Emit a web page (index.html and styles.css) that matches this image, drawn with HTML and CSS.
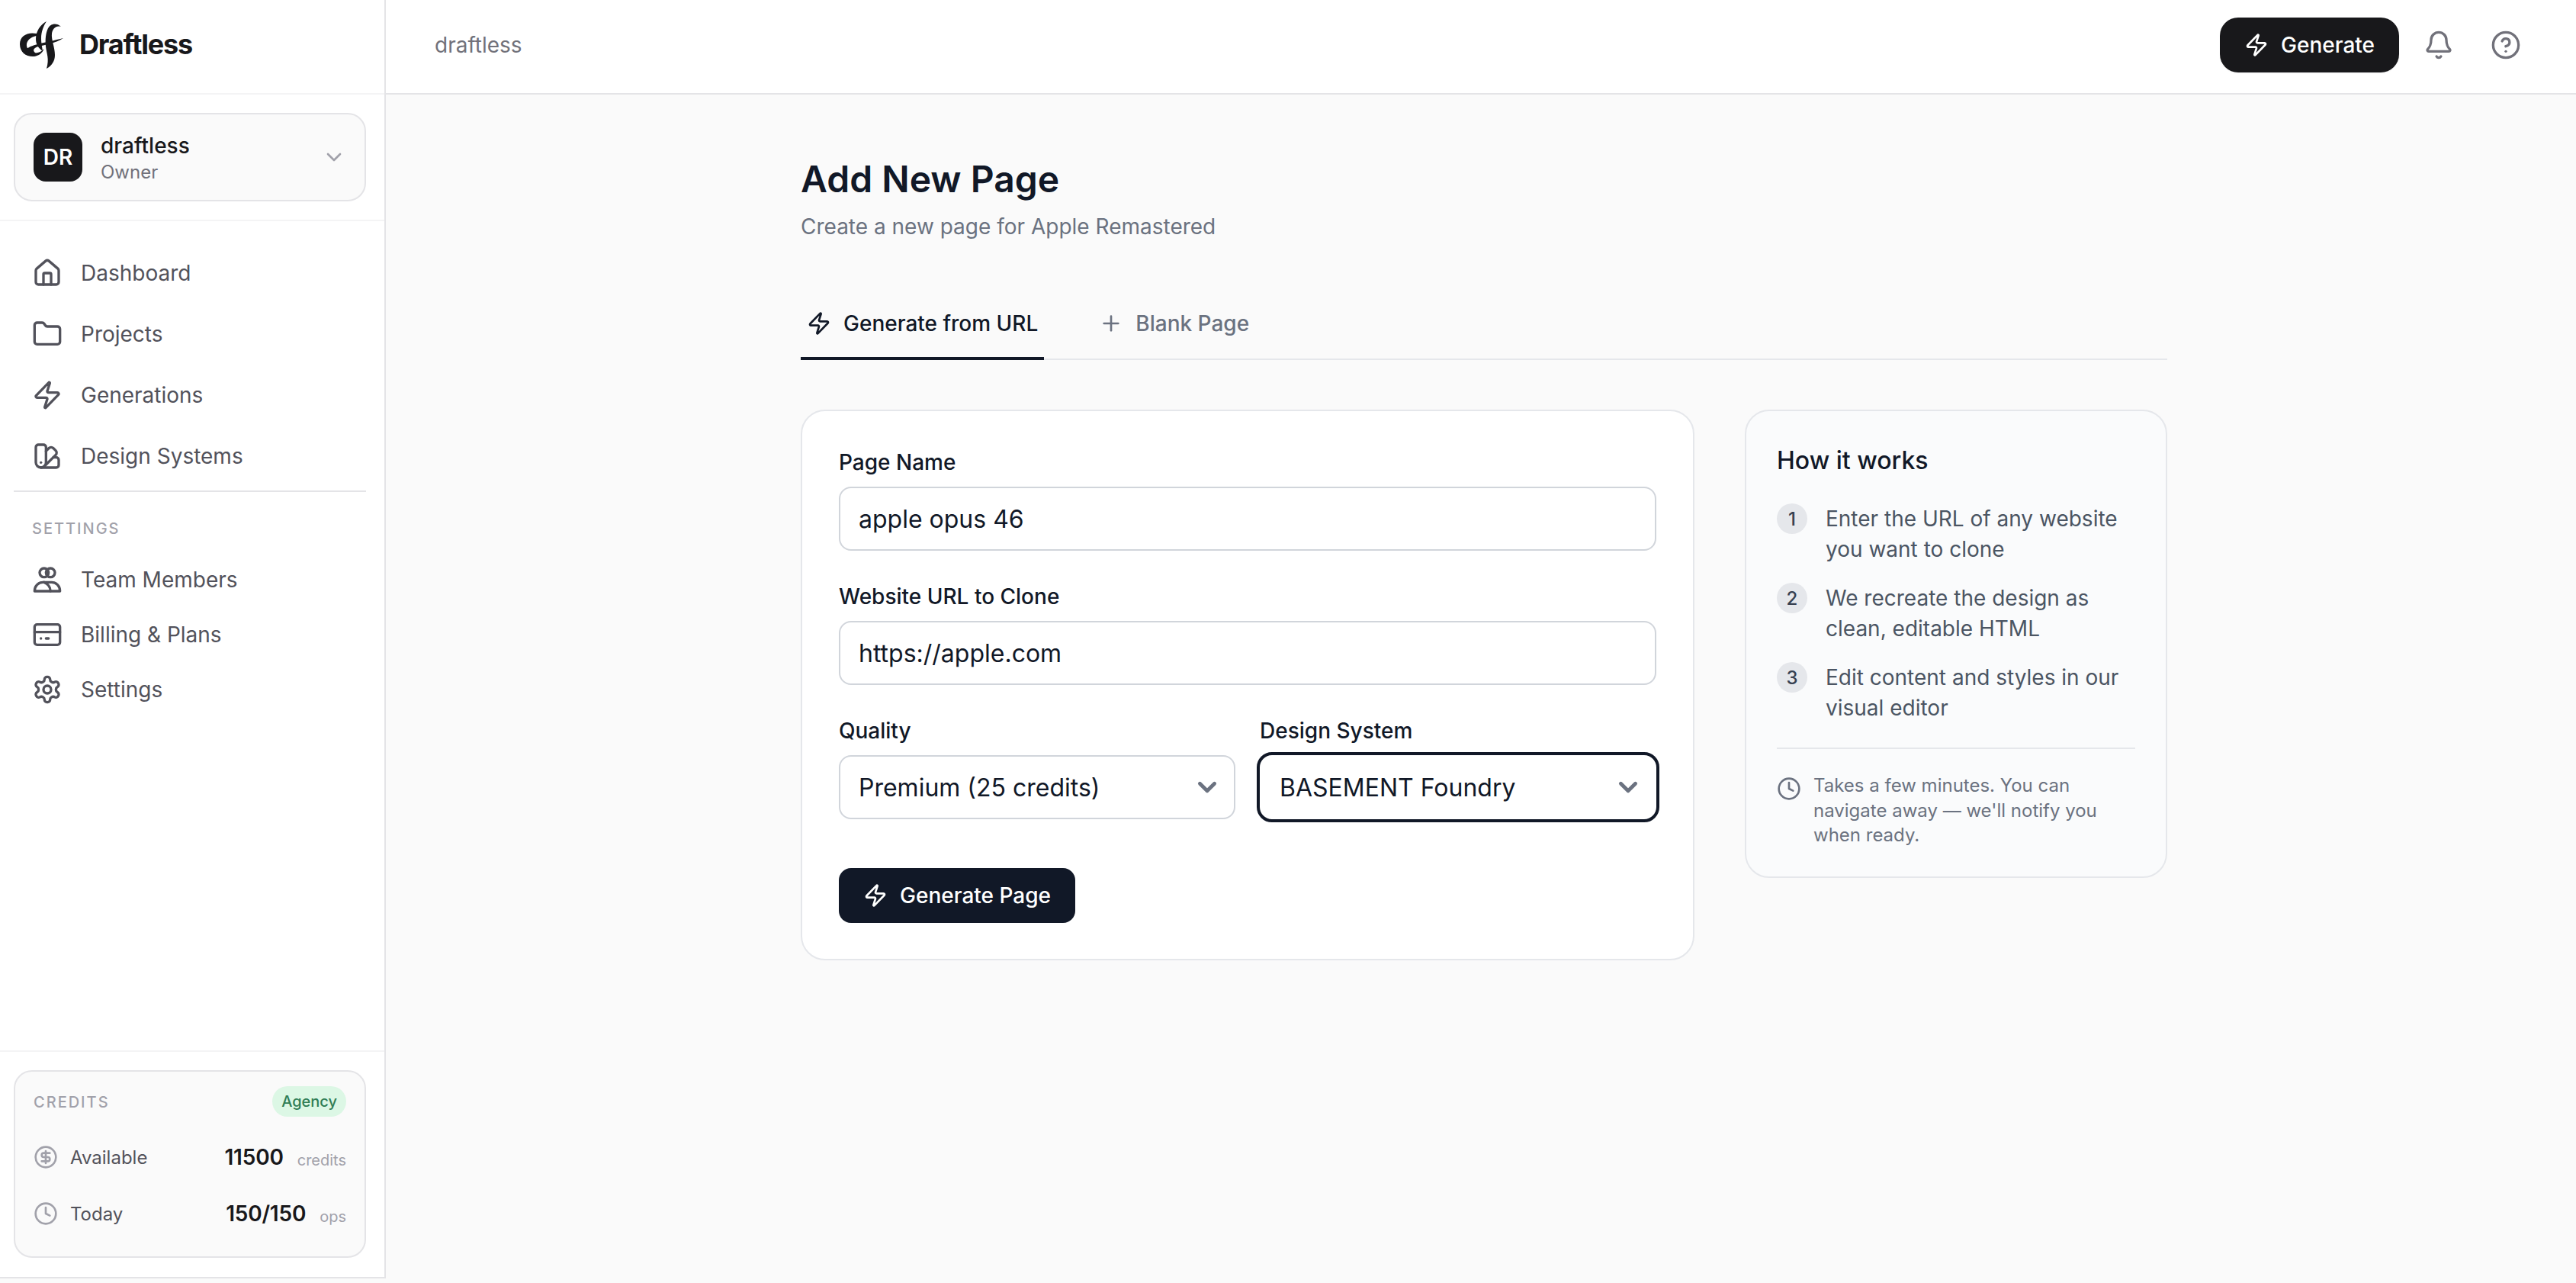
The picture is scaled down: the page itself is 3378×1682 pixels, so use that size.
FILE: index.html
```html
<!DOCTYPE html>
<html>
<head>
    <meta charset="utf-8">
    <title>Add New Page - Draftless</title>
    <link rel="stylesheet" href="styles.css">
</head>
<body>
    <div class="app">
        <aside class="sidebar">
            <div class="brand">
                <svg class="brand-mark" viewBox="0 0 72 76" fill="#18181b">
                    <path d="M34 26C20 20 6 25 6 38C6 49 15 55 25 54C31 53 35 50 38 44C33 49 27 51 21 48C15 45 13 38 17 33C21 28 27 27 34 26Z"/>
                    <path d="M41 8C33 12 27 21 27 31C27 38 30 43 36 47C35 40 34 36 34 30C34 22 37 14 41 8Z"/>
                    <path d="M60 15C54 9 46 11 43 17C40 23 39 32 40 41C41 50 45 57 41 70C48 66 52 60 52 52C52 42 47 32 48 24C49 18 53 13 60 15Z"/>
                    <path d="M13 46C20 38 36 37 63 30C52 37 38 39 30 41C24 43 22 46 27 50C20 50 16 49 13 46Z"/>
                </svg>
                <span class="brand-name">Draftless</span>
            </div>

            <div class="workspace-wrap">
                <div class="workspace">
                    <div class="avatar">DR</div>
                    <div class="workspace-info">
                        <div class="workspace-name">draftless</div>
                        <div class="workspace-role">Owner</div>
                    </div>
                    <svg class="workspace-chevron" viewBox="0 0 24 24" fill="none" stroke="currentColor" stroke-width="2" stroke-linecap="round" stroke-linejoin="round"><path d="m6 9 6 6 6-6"/></svg>
                </div>
            </div>

            <nav class="nav">
                <a class="nav-item">
                    <svg class="icon" viewBox="0 0 24 24"><path d="M15 21v-8a1 1 0 0 0-1-1h-4a1 1 0 0 0-1 1v8"/><path d="M3 10a2 2 0 0 1 .709-1.528l7-5.999a2 2 0 0 1 2.582 0l7 5.999A2 2 0 0 1 21 10v9a2 2 0 0 1-2 2H5a2 2 0 0 1-2-2z"/></svg>
                    Dashboard
                </a>
                <a class="nav-item">
                    <svg class="icon" viewBox="0 0 24 24"><path d="M20 20a2 2 0 0 0 2-2V8a2 2 0 0 0-2-2h-7.9a2 2 0 0 1-1.69-.9L9.6 3.9A2 2 0 0 0 7.93 3H4a2 2 0 0 0-2 2v13a2 2 0 0 0 2 2Z"/></svg>
                    Projects
                </a>
                <a class="nav-item">
                    <svg class="icon" viewBox="0 0 24 24"><path d="M4 14a1 1 0 0 1-.78-1.63l9.9-10.2a.5.5 0 0 1 .86.46l-1.92 6.02A1 1 0 0 0 13 10h7a1 1 0 0 1 .78 1.63l-9.9 10.2a.5.5 0 0 1-.86-.46l1.92-6.02A1 1 0 0 0 11 14z"/></svg>
                    Generations
                </a>
                <a class="nav-item">
                    <svg class="icon" viewBox="0 0 24 24"><path d="M11 17a4 4 0 0 1-8 0V5a2 2 0 0 1 2-2h4a2 2 0 0 1 2 2Z"/><path d="M16.7 13H19a2 2 0 0 1 2 2v4a2 2 0 0 1-2 2H7"/><path d="M 7 17h.01"/><path d="m11 8 2.3-2.3a2.4 2.4 0 0 1 3.404.004L18.6 7.6a2.4 2.4 0 0 1 .026 3.434L9.9 19.8"/></svg>
                    Design Systems
                </a>
            </nav>

            <div class="nav-divider"></div>
            <div class="nav-heading">SETTINGS</div>

            <nav class="nav nav-settings">
                <a class="nav-item">
                    <svg class="icon" viewBox="0 0 24 24"><circle cx="9.5" cy="6.5" r="3.5"/><circle cx="14.5" cy="6.5" r="3.5"/><path d="M2 21c0-4 3-7 6.5-7h7c3.500 0 6.500 3 6.500 7z"/><path d="M14.500 21c0-3.500-2.500-6-5-7"/></svg>
                    Team Members
                </a>
                <a class="nav-item">
                    <svg class="icon" viewBox="0 0 24 24"><rect width="20" height="16" x="2" y="4" rx="2"/><path d="M2 10h20"/><path d="M7 15h.01"/><path d="M11 15h2"/></svg>
                    Billing &amp; Plans
                </a>
                <a class="nav-item">
                    <svg class="icon" viewBox="0 0 24 24"><path d="M12.22 2h-.44a2 2 0 0 0-2 2v.18a2 2 0 0 1-1 1.73l-.43.25a2 2 0 0 1-2 0l-.15-.08a2 2 0 0 0-2.73.73l-.22.38a2 2 0 0 0 .73 2.73l.15.1a2 2 0 0 1 1 1.72v.51a2 2 0 0 1-1 1.74l-.15.09a2 2 0 0 0-.73 2.73l.22.38a2 2 0 0 0 2.73.73l.15-.08a2 2 0 0 1 2 0l.43.25a2 2 0 0 1 1 1.73V20a2 2 0 0 0 2 2h.44a2 2 0 0 0 2-2v-.18a2 2 0 0 1 1-1.73l.43-.25a2 2 0 0 1 2 0l.15.08a2 2 0 0 0 2.73-.73l.22-.39a2 2 0 0 0-.73-2.73l-.15-.08a2 2 0 0 1-1-1.74v-.5a2 2 0 0 1 1-1.74l.15-.09a2 2 0 0 0 .73-2.73l-.22-.38a2 2 0 0 0-2.73-.73l-.15.08a2 2 0 0 1-2 0l-.43-.25a2 2 0 0 1-1-1.73V4a2 2 0 0 0-2-2z"/><circle cx="12" cy="12" r="3"/></svg>
                    Settings
                </a>
            </nav>

            <div class="credits-wrap">
                <div class="credits">
                    <div class="credits-top">
                        <span class="credits-label">CREDITS</span>
                        <span class="plan-badge">Agency</span>
                    </div>
                    <div class="credits-row">
                        <svg class="icon icon-sm" viewBox="0 0 24 24"><circle cx="12" cy="12" r="10"/><path d="M16 8h-6a2 2 0 1 0 0 4h4a2 2 0 1 1 0 4H8"/><path d="M12 18V6"/></svg>
                        <span class="credits-name">Available</span>
                        <span class="credits-value">11500</span>
                        <span class="credits-unit">credits</span>
                    </div>
                    <div class="credits-row">
                        <svg class="icon icon-sm" viewBox="0 0 24 24"><circle cx="12" cy="12" r="10"/><path d="M12 6v6l4 2"/></svg>
                        <span class="credits-name">Today</span>
                        <span class="credits-value">150/150</span>
                        <span class="credits-unit">ops</span>
                    </div>
                </div>
            </div>
        </aside>

        <div class="main">
            <header class="topbar">
                <span class="crumb">draftless</span>
                <div class="topbar-actions">
                    <button class="btn-generate">
                        <svg class="icon icon-btn" viewBox="0 0 24 24"><path d="M4 14a1 1 0 0 1-.78-1.63l9.9-10.2a.5.5 0 0 1 .86.46l-1.92 6.02A1 1 0 0 0 13 10h7a1 1 0 0 1 .78 1.63l-9.9 10.2a.5.5 0 0 1-.86-.46l1.92-6.02A1 1 0 0 0 11 14z"/></svg>
                        Generate
                    </button>
                    <svg class="icon icon-top" viewBox="0 0 24 24"><path d="M10.268 21a2 2 0 0 0 3.464 0"/><path d="M3.262 15.326A1 1 0 0 0 4 17h16a1 1 0 0 0 .74-1.673C19.41 13.956 18 12.499 18 8A6 6 0 0 0 6 8c0 4.499-1.411 5.956-2.738 7.326"/></svg>
                    <svg class="icon icon-top" viewBox="0 0 24 24"><circle cx="12" cy="12" r="10"/><path d="M9.09 9a3 3 0 0 1 5.83 1c0 2-3 3-3 3"/><path d="M12 17h.01"/></svg>
                </div>
            </header>

            <main class="content">
                <h1 class="page-title">Add New Page</h1>
                <p class="page-sub">Create a new page for Apple Remastered</p>

                <div class="tabs">
                    <div class="tab active">
                        <svg class="icon icon-btn" viewBox="0 0 24 24"><path d="M4 14a1 1 0 0 1-.78-1.63l9.9-10.2a.5.5 0 0 1 .86.46l-1.92 6.02A1 1 0 0 0 13 10h7a1 1 0 0 1 .78 1.63l-9.9 10.2a.5.5 0 0 1-.86-.46l1.92-6.02A1 1 0 0 0 11 14z"/></svg>
                        Generate from URL
                    </div>
                    <div class="tab">
                        <svg class="icon icon-btn" viewBox="0 0 24 24"><path d="M5 12h14"/><path d="M12 5v14"/></svg>
                        Blank Page
                    </div>
                </div>

                <div class="columns">
                    <form class="form-card">
                        <div class="field">
                            <label class="field-label">Page Name</label>
                            <input class="field-input" type="text" value="apple opus 46">
                        </div>
                        <div class="field">
                            <label class="field-label">Website URL to Clone</label>
                            <input class="field-input" type="text" value="https://apple.com">
                        </div>
                        <div class="field-pair">
                            <div class="field">
                                <label class="field-label">Quality</label>
                                <div class="select-box">
                                    <select class="field-input"><option>Premium (25 credits)</option></select>
                                    <svg class="select-chevron" viewBox="0 0 20 20" fill="none" stroke="#6b7280" stroke-width="2" stroke-linecap="round" stroke-linejoin="round"><path d="m6 8 4 4 4-4"/></svg>
                                </div>
                            </div>
                            <div class="field">
                                <label class="field-label">Design System</label>
                                <div class="select-box">
                                    <select class="field-input focused"><option>BASEMENT Foundry</option></select>
                                    <svg class="select-chevron" viewBox="0 0 20 20" fill="none" stroke="#6b7280" stroke-width="2" stroke-linecap="round" stroke-linejoin="round"><path d="m6 8 4 4 4-4"/></svg>
                                </div>
                            </div>
                        </div>
                        <button class="btn-submit" type="button">
                            <svg class="icon icon-btn" viewBox="0 0 24 24"><path d="M4 14a1 1 0 0 1-.78-1.63l9.9-10.2a.5.5 0 0 1 .86.46l-1.92 6.02A1 1 0 0 0 13 10h7a1 1 0 0 1 .78 1.63l-9.9 10.2a.5.5 0 0 1-.86-.46l1.92-6.02A1 1 0 0 0 11 14z"/></svg>
                            Generate Page
                        </button>
                    </form>

                    <section class="help-card">
                        <h3 class="help-title">How it works</h3>
                        <div class="steps">
                            <div class="step"><span class="step-num">1</span><span class="step-text">Enter the URL of any website you want to clone</span></div>
                            <div class="step"><span class="step-num">2</span><span class="step-text">We recreate the design as clean, editable HTML</span></div>
                            <div class="step"><span class="step-num">3</span><span class="step-text">Edit content and styles in our visual editor</span></div>
                        </div>
                        <div class="help-note">
                            <svg class="icon icon-note" viewBox="0 0 24 24"><circle cx="12" cy="12" r="10"/><path d="M12 6v6l4 2"/></svg>
                            <span>Takes a few minutes. You can navigate away — we'll notify you when ready.</span>
                        </div>
                    </section>
                </div>
            </main>
        </div>
    </div>
</body>
</html>
```
FILE: styles.css
```css
* {
    box-sizing: border-box;
}

html, body {
    height: 100%;
    margin: 0;
    overflow: hidden;
}

body {
    font-family: Inter, "Noto Sans", sans-serif;
    background: #fafafa;
    color: #18181b;
}

.app {
    display: flex;
    height: 1682px;
}

.icon {
    width: 40px;
    height: 40px;
    flex: none;
    fill: none;
    stroke: currentColor;
    stroke-width: 2;
    stroke-linecap: round;
    stroke-linejoin: round;
}

.icon-btn { width: 32px; height: 32px; }
.icon-sm { width: 32px; height: 32px; color: #a1a1aa; }
.icon-note { width: 32px; height: 32px; color: #6b7280; margin-top: 4px; }
.icon-top { color: #71717a; }

/* sidebar */
.sidebar {
    width: 506px;
    flex: none;
    background: white;
    border-right: 2px solid #e4e4e7;
    display: flex;
    flex-direction: column;
    height: 1676px;
}

.brand {
    height: 124px;
    flex: none;
    display: flex;
    align-items: center;
    padding: 0 0 6px 20px;
    gap: 12px;
    border-bottom: 2px solid #f4f4f5;
}

.brand-mark {
    width: 72px;
    height: 76px;
}

.brand-name {
    font-size: 36px;
    font-weight: 700;
    letter-spacing: -1.2px;
}

.workspace-wrap {
    padding: 24px 24px 24px 18px;
    border-bottom: 2px solid #f4f4f5;
}

.workspace {
    height: 116px;
    display: flex;
    align-items: center;
    padding: 0 24px;
    gap: 24px;
    background: #fafafa;
    border: 2px solid #e4e4e7;
    border-radius: 24px;
}

.avatar {
    width: 64px;
    height: 64px;
    flex: none;
    border-radius: 16px;
    background: #18181b;
    color: white;
    font-size: 28px;
    font-weight: 600;
    display: flex;
    align-items: center;
    justify-content: center;
}

.workspace-info {
    flex: 1;
    padding-top: 2px;
}

.workspace-name {
    font-size: 28px;
    line-height: 36px;
    font-weight: 500;
}

.workspace-role {
    font-size: 24px;
    line-height: 32px;
    margin-top: 1px;
    color: #71717a;
}

.workspace-chevron {
    width: 32px;
    height: 32px;
    color: #a1a1aa;
}

.nav {
    display: flex;
    flex-direction: column;
    gap: 8px;
    padding: 32px 24px 0 18px;
}

.nav-item {
    height: 72px;
    display: flex;
    align-items: center;
    gap: 24px;
    padding-left: 24px;
    font-size: 28px;
    color: #52525b;
}

.nav-divider {
    height: 2px;
    background: #e4e4e7;
    margin: 9px 24px 0 18px;
}

.nav-heading {
    margin: 36px 0 0 42px;
    font-size: 20px;
    line-height: 24px;
    font-weight: 500;
    letter-spacing: 2px;
    color: #a1a1aa;
}

.nav-settings {
    gap: 0;
    padding-top: 19px;
}

.credits-wrap {
    margin-top: auto;
    padding: 24px 24px 25px 18px;
    border-top: 2px solid #f4f4f5;
    border-bottom: 2px solid #e4e4e7;
}

.credits {
    height: 246px;
    padding: 19px 24px 0;
    background: #fafafa;
    border: 2px solid #e4e4e7;
    border-radius: 24px;
}

.credits-top {
    display: flex;
    align-items: center;
    justify-content: space-between;
    height: 40px;
    margin-bottom: 16px;
}

.credits-label {
    margin-top: 2px;
    font-size: 20px;
    font-weight: 500;
    letter-spacing: 2px;
    color: #a1a1aa;
}

.plan-badge {
    height: 40px;
    padding: 0 12px;
    display: flex;
    align-items: center;
    border-radius: 20px;
    background: #dcf7e5;
    color: #2f7d55;
    font-size: 20px;
    font-weight: 500;
}

.credits-row {
    display: flex;
    align-items: center;
    height: 74px;
}

.credits-name {
    font-size: 24px;
    color: #52525b;
    margin-left: 16px;
    flex: 1;
}

.credits-value {
    font-size: 28px;
    font-weight: 600;
    letter-spacing: -0.2px;
}

.credits-unit {
    font-size: 20px;
    color: #a1a1aa;
    margin-left: 18px;
    margin-top: 8px;
}

/* main */
.main {
    flex: 1;
    display: flex;
    flex-direction: column;
    min-width: 0;
}

.topbar {
    height: 124px;
    flex: none;
    background: white;
    border-bottom: 2px solid #e4e4e7;
    display: flex;
    align-items: center;
    justify-content: space-between;
    padding: 0 72px 4px 64px;
}

.crumb {
    font-size: 28px;
    color: #71717a;
}

.topbar-actions {
    display: flex;
    align-items: center;
    gap: 48px;
}

.btn-generate {
    height: 72px;
    margin-right: -16px;
    padding: 0 32px;
    display: flex;
    align-items: center;
    gap: 16px;
    border: none;
    border-radius: 24px;
    background: #18181b;
    color: white;
    font-family: inherit;
    font-size: 28px;
    font-weight: 500;
    box-shadow: 0 1px 2px rgba(0,0,0,0.05);
}

.content {
    width: 1792px;
    margin-left: 544px;
    padding-top: 79px;
}

.page-title {
    margin: 0;
    font-size: 48px;
    line-height: 64px;
    font-weight: 600;
    color: #111827;
}

.page-sub {
    margin: 10px 0 0;
    font-size: 28px;
    line-height: 40px;
    color: #6b7280;
}

.tabs {
    display: flex;
    gap: 64px;
    margin-top: 63px;
    border-bottom: 2px solid #e5e7eb;
    height: 92px;
}

.tab {
    display: flex;
    align-items: center;
    gap: 16px;
    height: 92px;
    padding: 0 8px 4px;
    font-size: 28px;
    font-weight: 500;
    color: #6b7280;
}

.tab.active {
    color: #111827;
    border-bottom: 4px solid #111827;
    padding-bottom: 0;
}

.columns {
    display: flex;
    gap: 66px;
    margin-top: 65px;
    align-items: flex-start;
}

.form-card {
    flex: 1;
    height: 722px;
    padding: 47px 48px 0;
    background: white;
    border: 2px solid #e5e7eb;
    border-radius: 32px;
}

.field {
    margin-bottom: 40px;
}

.field-label {
    display: block;
    font-size: 28px;
    line-height: 40px;
    font-weight: 500;
    color: #111827;
    margin-bottom: 12px;
}

.field-input {
    display: block;
    width: 100%;
    height: 84px;
    padding: 0 24px;
    background: white;
    border: 2px solid #d1d5db;
    border-radius: 16px;
    font-family: inherit;
    font-size: 32px;
    color: #111827;
    appearance: none;
}

.field-input.focused {
    border-color: white;
    outline: 4px solid #111827;
}

.field-pair {
    display: grid;
    grid-template-columns: 1fr 1fr;
    gap: 32px;
}

.select-box {
    position: relative;
}

.select-chevron {
    position: absolute;
    right: 13px;
    top: 18px;
    width: 48px;
    height: 48px;
    pointer-events: none;
}

.btn-submit {
    height: 72px;
    margin-top: 24px;
    padding: 0 32px;
    display: flex;
    align-items: center;
    gap: 16px;
    border: none;
    border-radius: 16px;
    background: #111827;
    color: white;
    font-family: inherit;
    font-size: 28px;
    font-weight: 500;
}

.help-card {
    width: 554px;
    flex: none;
    height: 614px;
    padding: 45px 40px 0;
    background: #fafbfc;
    border: 2px solid #e5e7eb;
    border-radius: 32px;
}

.help-title {
    margin: 0;
    font-size: 32px;
    line-height: 40px;
    font-weight: 500;
    color: #111827;
}

.steps {
    display: flex;
    flex-direction: column;
    gap: 24px;
    margin-top: 36px;
}

.step {
    display: flex;
    gap: 24px;
}

.step-num {
    width: 40px;
    height: 40px;
    flex: none;
    border-radius: 50%;
    background: #e5e7eb;
    color: #374151;
    font-size: 24px;
    font-weight: 500;
    display: flex;
    align-items: center;
    justify-content: center;
}

.step-text {
    font-size: 28px;
    line-height: 40px;
    color: #4b5563;
}

.help-note {
    display: flex;
    gap: 16px;
    margin-top: 32px;
    padding-top: 32px;
    border-top: 2px solid #e5e7eb;
    font-size: 24px;
    line-height: 32.5px;
    color: #6b7280;
}
```
